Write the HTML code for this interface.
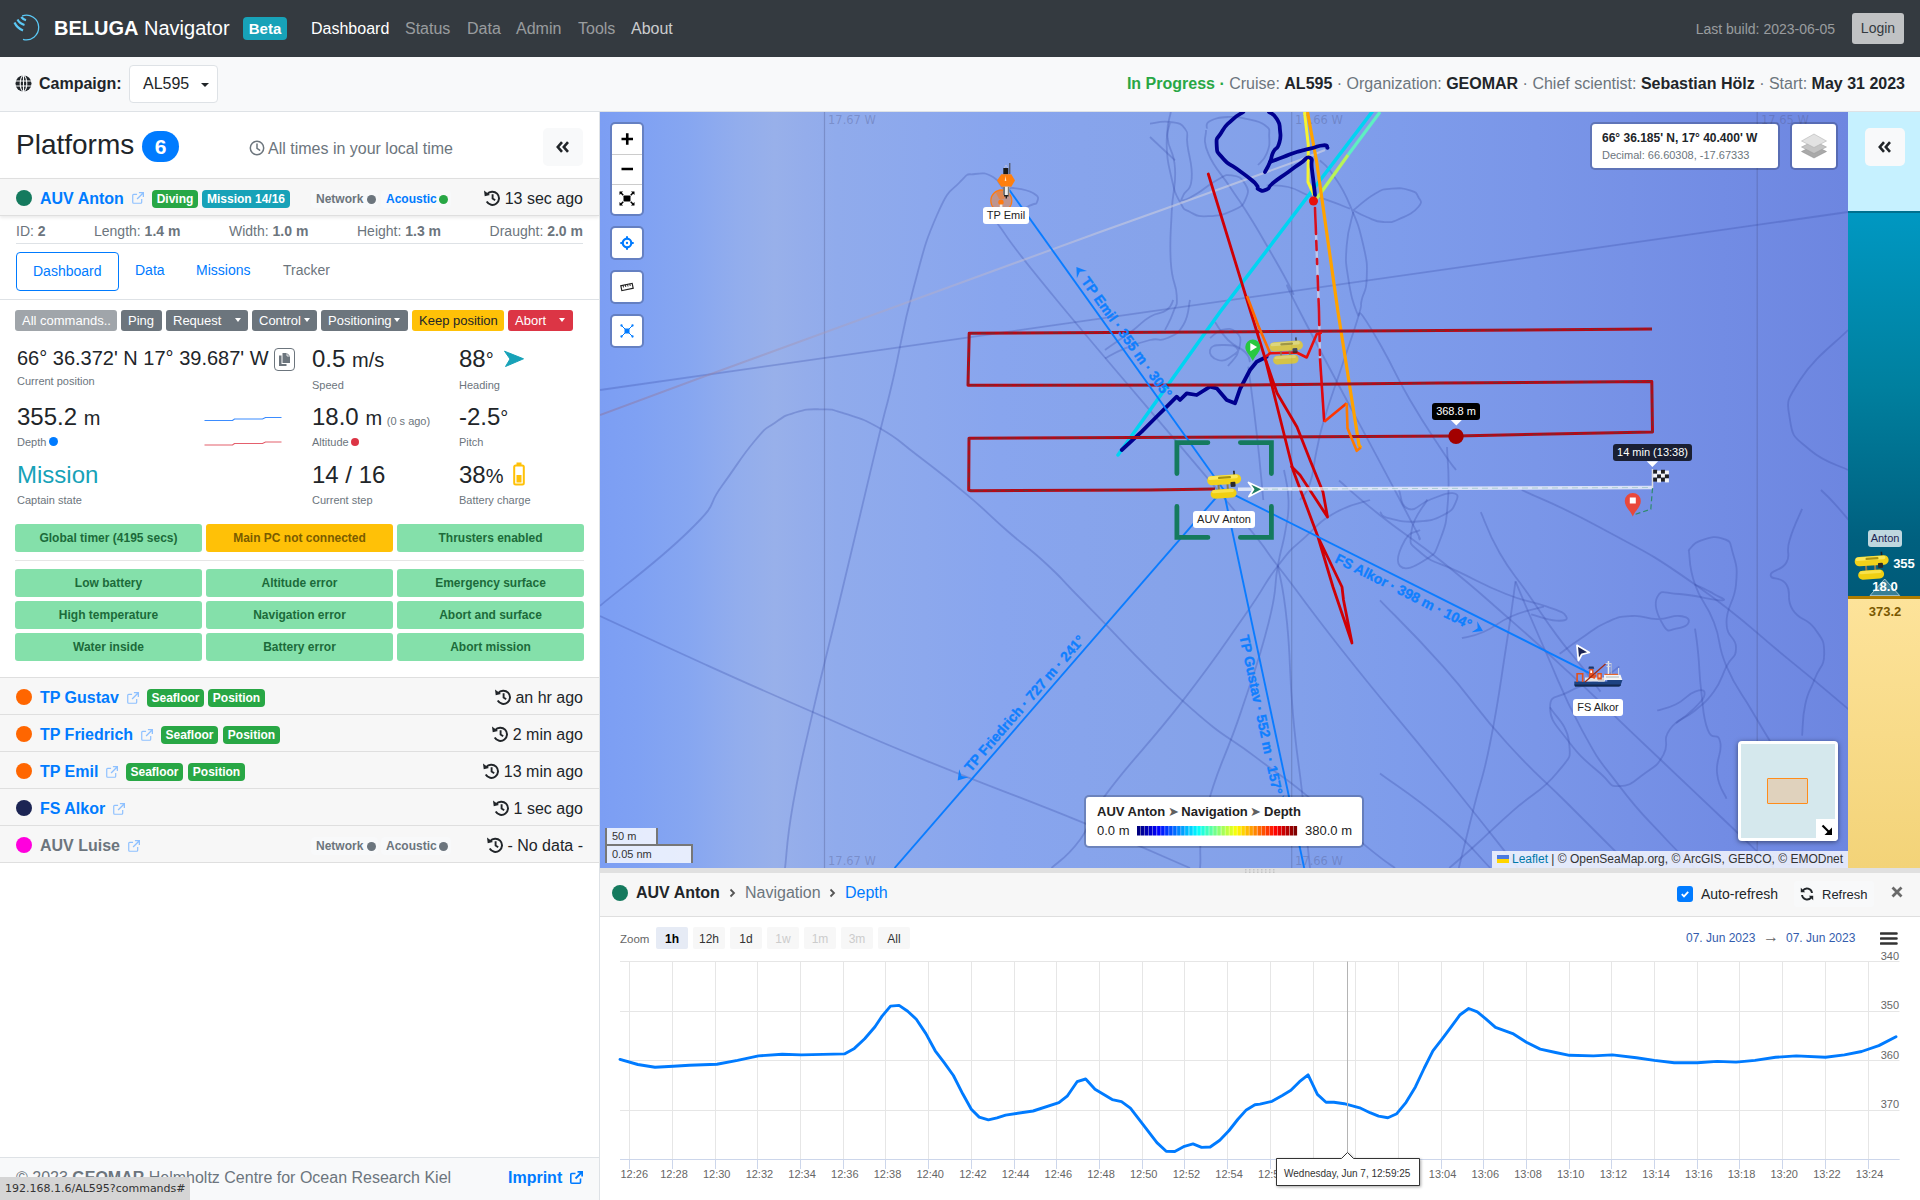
<!DOCTYPE html>
<html lang="en"><head><meta charset="utf-8"><title>BELUGA Navigator</title>
<style>
*{box-sizing:border-box}
html,body{margin:0;padding:0}
body{width:1920px;height:1200px;overflow:hidden;position:relative;background:#fff;font-family:"Liberation Sans",Arial,sans-serif;font-size:16px;color:#212529;line-height:1.5}
a{color:#007bff;text-decoration:none}
.abs{position:absolute}
/* navbar */
#nav{position:absolute;left:0;top:0;width:1920px;height:57px;background:#343a40;color:#fff}
#nav .brand{position:absolute;left:54px;top:13px;font-size:20px;line-height:30px;white-space:nowrap}
#nav .beta{position:absolute;left:243px;top:17px;height:23px;width:44px;background:#17a2b8;border-radius:4px;font-size:15px;font-weight:700;line-height:23px;text-align:center}
#nav .lnk{position:absolute;top:17px;font-size:16px;line-height:24px;color:rgba(255,255,255,.5);white-space:nowrap}
#nav .lnk.on{color:#fff}
#nav .lnk.mid{color:rgba(255,255,255,.75)}
#nav .build{position:absolute;right:85px;top:17px;font-size:14px;line-height:24px;color:rgba(255,255,255,.5)}
#nav .login{position:absolute;left:1852px;top:13px;width:52px;height:31px;background:#c0c2c4;border-radius:3px;color:#343a40;font-size:14px;line-height:31px;text-align:center}
/* campaign bar */
#camp{position:absolute;left:0;top:57px;width:1920px;height:55px;background:#f8f9fa;border-bottom:1px solid #dee2e6;box-shadow:0 2px 4px rgba(0,0,0,.08)}
#camp .lbl{position:absolute;left:39px;top:15px;font-weight:700;font-size:16px;line-height:24px}
#camp .sel{position:absolute;left:129px;top:8px;width:89px;height:38px;border:1px solid #dee2e6;border-radius:4px;background:#fff;font-size:16px;line-height:36px;padding-left:13px}
#camp .info{position:absolute;right:15px;top:15px;font-size:16px;line-height:24px;color:#6c757d;white-space:nowrap}
#camp .info b{color:#212529}
/* left panel */
#left{position:absolute;left:0;top:112px;width:600px;height:1088px;border-right:1px solid #dee2e6;background:#fff}
/* map */
#map{position:absolute;left:600px;top:112px;width:1248px;height:756px;overflow:hidden;background:#8aa5ee}
#dp{position:absolute;left:1848px;top:112px;width:72px;height:756px;overflow:hidden}
#split{position:absolute;left:600px;top:868px;width:1320px;height:5px;background:#e0e0e0}
#chart{position:absolute;left:600px;top:873px;width:1320px;height:327px;background:#fff}
</style></head>
<body>
<svg width="0" height="0" style="position:absolute"><defs>
<g id="xl"><path d="M10.500 7.500v3.700a1 1 0 0 1-1 1h-7.700a1 1 0 0 1-1-1v-7.700a1 1 0 0 1 1-1h3.700" fill="none" stroke="#8fc1ff" stroke-width="1.300"/><path d="M7.500.7h4.800v4.800M12 1L5.500 7.500" fill="none" stroke="#8fc1ff" stroke-width="1.400"/></g>
<g id="xl2"><path d="M10.500 7.500v3.700a1 1 0 0 1-1 1h-7.700a1 1 0 0 1-1-1v-7.700a1 1 0 0 1 1-1h3.700" fill="none" stroke="#007bff" stroke-width="1.600"/><path d="M7.500.8h4.700v4.700M12 1L5.500 7.500" fill="none" stroke="#007bff" stroke-width="1.800"/></g>
<g id="hist"><path d="M3.200 4.200A6.600 6.600 0 1 1 2.700 11.600" fill="none" stroke="#212529" stroke-width="2"/><path d="M0 .6l.7 5.600 5.300-1.200z" fill="#212529"/><path d="M8.600 4.200v4.300l2.600 1.800" fill="none" stroke="#212529" stroke-width="1.900"/></g>
</defs></svg>

<div id="nav">
<svg class="abs" style="left:12px;top:12px" width="30" height="30" viewBox="0 0 30 30"><path d="M10.200 3.900A12.300 12.300 0 1 1 11 27.300" fill="none" stroke="#5bc8f5" stroke-width="1.300"/><path d="M9.300 5Q11 7.300 14 8.200M5.500 7.500Q7.500 11.500 12.500 13M2.500 10.500Q5 16 11 18.500" fill="none" stroke="#5bc8f5" stroke-width="2.200"/></svg>
<div class="brand"><b>BELUGA</b> Navigator</div>
<div class="beta">Beta</div>
<div class="lnk on" style="left:311px">Dashboard</div>
<div class="lnk" style="left:405px">Status</div>
<div class="lnk" style="left:467px">Data</div>
<div class="lnk" style="left:516px">Admin</div>
<div class="lnk" style="left:578px">Tools</div>
<div class="lnk mid" style="left:631px">About</div>
<div class="build">Last build: 2023-06-05</div>
<div class="login">Login</div>
</div>
<div id="camp">
<svg class="abs" style="left:15px;top:18px" width="17" height="17" viewBox="0 0 17 17"><circle cx="8.500" cy="8.500" r="8" fill="#212529"/><g stroke="#f8f9fa" stroke-width="1.100" fill="none"><ellipse cx="8.500" cy="8.500" rx="3.300" ry="8"/><path d="M.5 6h16M.5 11h16M8.500 .5v16"/></g></svg>
<div class="lbl">Campaign:</div>
<div class="sel">AL595 <span style="display:inline-block;vertical-align:2px;margin-left:7px;border-top:4px solid #212529;border-left:4px solid transparent;border-right:4px solid transparent"></span></div>
<div class="info"><b style="color:#28a745">In Progress</b> <b style="color:#28a745">·</b> Cruise: <b>AL595</b> · Organization: <b>GEOMAR</b> · Chief scientist: <b>Sebastian Hölz</b> · Start: <b>May 31 2023</b></div>
</div>
<div id="left"><style>
#left .t{position:absolute;white-space:nowrap;line-height:1}
#left .hdr{position:absolute;left:0;width:599px;background:#f7f7f7;border-top:1px solid #dfdfdf;border-bottom:1px solid #dfdfdf}
.dot16{position:absolute;left:16px;width:16px;height:16px;border-radius:50%}
.bdg{position:absolute;height:18px;border-radius:4px;color:#fff;font-weight:700;font-size:12px;line-height:18px;text-align:center;white-space:nowrap}
.g{background:#28a745}
.sm{font-size:11px;color:#6c757d}
.big{font-size:24px;color:#212529}
.cmd{position:absolute;top:198px;height:21px;border-radius:3px;background:#6c757d;color:#fff;font-size:13px;line-height:21px;white-space:nowrap;padding-left:7px}
.car{position:absolute;top:8px;border-top:4px solid #fff;border-left:3.500px solid transparent;border-right:3.500px solid transparent}
.st{position:absolute;width:187px;height:28px;border-radius:3px;background:#84e0aa;color:#1c6b3a;font-weight:700;font-size:12px;line-height:28px;text-align:center}
.row{position:absolute;left:0;width:599px;height:38px;background:#f7f7f7;border-top:1px solid #dfdfdf;border-bottom:1px solid #dfdfdf}
.row .nm{position:absolute;left:40px;top:12px;font-weight:700;font-size:16px;line-height:1;white-space:nowrap}
.row .tm{position:absolute;right:16px;top:12px;font-size:16px;line-height:1;white-space:nowrap;color:#212529}
.nb{position:absolute;height:18px;border-radius:4px;background:#f8f9fa;font-weight:700;font-size:12px;line-height:18px;color:#6c757d;white-space:nowrap;padding-left:5px}
.nb i{position:absolute;top:5px;width:9px;height:9px;border-radius:50%;background:#6c757d}
</style>
<div class="t" style="left:16px;top:16px;font-size:28px;line-height:34px">Platforms</div>
<div class="abs" style="left:142px;top:19px;width:37px;height:31px;border-radius:16px;background:#007bff;color:#fff;font-weight:700;font-size:21px;line-height:31px;text-align:center">6</div>
<svg class="abs" style="left:249px;top:28px" width="16" height="16" viewBox="0 0 16 16"><circle cx="8" cy="8" r="6.700" fill="none" stroke="#6c757d" stroke-width="1.500"/><path d="M8 4v4.300l2.600 1.900" fill="none" stroke="#6c757d" stroke-width="1.500" stroke-linecap="round"/></svg>
<div class="t" style="left:268px;top:29px;font-size:16px;color:#6c757d;line-height:16px">All times in your local time</div>
<div class="abs" style="left:543px;top:16px;width:40px;height:38px;border-radius:5px;background:#f8f9fa"><svg class="abs" style="left:13px;top:13px" width="14" height="12" viewBox="0 0 14 12"><path d="M6 1.200L1.800 6 6 10.800M12 1.200L7.800 6 12 10.800" fill="none" stroke="#212529" stroke-width="2.600"/></svg></div>
<!-- AUV Anton header -->
<div class="hdr" style="top:66px;height:38px;box-shadow:0 2px 3px rgba(0,0,0,.08)"></div>
<div class="dot16" style="top:78px;background:#157a5e"></div>
<div class="t" style="left:40px;top:79px;font-weight:700;font-size:16px;color:#007bff">AUV Anton</div>
<svg class="abs xl" style="left:132px;top:80px" width="12" height="12" viewBox="0 0 13 13"><use href="#xl"/></svg>
<div class="bdg g" style="left:152px;top:78px;width:46px">Diving</div>
<div class="bdg" style="left:202px;top:78px;width:88px;background:#17a2b8">Mission 14/16</div>
<div class="nb" style="left:311px;top:78px;width:67px">Network<i style="left:56px"></i></div>
<div class="nb" style="left:381px;top:78px;width:70px;color:#007bff">Acoustic<i style="left:58px;background:#28a745"></i></div>
<svg class="abs" style="left:484px;top:78px" width="16" height="16" viewBox="0 0 16 16"><use href="#hist"/></svg>
<div class="t" style="right:16px;top:79px;font-size:16px">13 sec ago</div>
<!-- details -->
<div class="t" style="left:16px;top:112px;font-size:14px;color:#6c757d;top:112px">ID: <b>2</b></div>
<div class="t" style="left:94px;top:112px;font-size:14px;color:#6c757d">Length: <b>1.4 m</b></div>
<div class="t" style="left:229px;top:112px;font-size:14px;color:#6c757d">Width: <b>1.0 m</b></div>
<div class="t" style="left:357px;top:112px;font-size:14px;color:#6c757d">Height: <b>1.3 m</b></div>
<div class="t" style="right:16px;top:112px;font-size:14px;color:#6c757d">Draught: <b>2.0 m</b></div>
<div class="abs" style="left:16px;top:131px;width:567px;height:1px;background:#dee2e6"></div>
<!-- tabs -->
<div class="abs" style="left:16px;top:140px;width:103px;height:39px;border:1px solid #007bff;border-radius:4px"></div>
<div class="t" style="left:33px;top:152px;font-size:14px;color:#007bff">Dashboard</div>
<div class="t" style="left:135px;top:151px;font-size:14px;color:#007bff">Data</div>
<div class="t" style="left:196px;top:151px;font-size:14px;color:#007bff">Missions</div>
<div class="t" style="left:283px;top:151px;font-size:14px;color:#6c757d">Tracker</div>
<div class="abs" style="left:0;top:187px;width:599px;height:1px;background:#dee2e6"></div>
<!-- commands -->
<div class="cmd" style="left:15px;width:102px;background:#a0a5aa">All commands..</div>
<div class="cmd" style="left:121px;width:41px">Ping</div>
<div class="cmd" style="left:166px;width:82px">Request<i class="car" style="left:69px"></i></div>
<div class="cmd" style="left:252px;width:65px">Control<i class="car" style="left:52px"></i></div>
<div class="cmd" style="left:321px;width:87px">Positioning<i class="car" style="left:73px"></i></div>
<div class="cmd" style="left:412px;width:92px;background:#ffc107;color:#212529">Keep position</div>
<div class="cmd" style="left:508px;width:65px;background:#dc3545">Abort<i class="car" style="left:51px"></i></div>
<!-- data grid -->
<div class="t" style="left:17px;top:236px;font-size:20px">66° 36.372' N 17° 39.687' W</div>
<div class="abs" style="left:274px;top:236px;width:21px;height:23px;border:1px solid #6c757d;border-radius:4px"><svg class="abs" style="left:4px;top:4px" width="11" height="13" viewBox="0 0 11 13"><path d="M3.500 0h4.500l3 3v7h-7.500z" fill="#6c757d"/><path d="M0 2.500h2.500v8.500h5v2h-7.500z" fill="#6c757d"/><path d="M8 0v3h3" fill="none" stroke="#fff" stroke-width=".8"/></svg></div>
<div class="t sm" style="left:17px;top:264px">Current position</div>
<div class="t big" style="left:312px;top:235px">0.5 <span style="font-size:20px">m/s</span></div>
<div class="t sm" style="left:312px;top:268px">Speed</div>
<div class="t big" style="left:459px;top:235px">88<span style="font-size:20px">°</span></div>
<svg class="abs" style="left:503px;top:238px" width="21" height="18" viewBox="0 0 21 18"><path d="M1.500 1.200L20.500 8.800 2.500 16.500 7 9z" fill="#17a2b8" stroke="#17a2b8" stroke-width="1" stroke-linejoin="round"/></svg>
<div class="t sm" style="left:459px;top:268px">Heading</div>
<div class="t big" style="left:17px;top:293px">355.2 <span style="font-size:20px">m</span></div>
<div class="t sm" style="left:17px;top:325px">Depth</div>
<div class="abs" style="left:49px;top:325px;width:9px;height:9px;border-radius:50%;background:#007bff"></div>
<svg class="abs" style="left:200px;top:300px" width="90" height="40" viewBox="0 0 90 40"><path d="M4.500 8.500h28l2-1.500h28l3-1.500h16" fill="none" stroke="#3b8cff" stroke-width="1.200"/><path d="M4.500 33h28l2-1.500h28l3-1.500h16" fill="none" stroke="#e4606d" stroke-width="1.200"/></svg>
<div class="t big" style="left:312px;top:293px">18.0 <span style="font-size:20px">m</span> <span class="sm" style="margin-left:-2px">(0 s ago)</span></div>
<div class="t sm" style="left:312px;top:325px">Altitude</div>
<div class="abs" style="left:351px;top:326px;width:8px;height:8px;border-radius:50%;background:#dc3545"></div>
<div class="t big" style="left:459px;top:293px">-2.5<span style="font-size:20px">°</span></div>
<div class="t sm" style="left:459px;top:325px">Pitch</div>
<div class="t big" style="left:17px;top:351px;color:#17a2b8">Mission</div>
<div class="t sm" style="left:17px;top:383px">Captain state</div>
<div class="t big" style="left:312px;top:351px">14 / 16</div>
<div class="t sm" style="left:312px;top:383px">Current step</div>
<div class="t big" style="left:459px;top:351px">38<span style="font-size:20px">%</span></div>
<svg class="abs" style="left:513px;top:350px" width="12" height="24" viewBox="0 0 12 24"><rect x="1.200" y="3.500" width="9.600" height="19" rx="1.500" fill="none" stroke="#ffc107" stroke-width="2"/><rect x="3.500" y=".5" width="5" height="3" fill="#ffc107"/><rect x="3.500" y="13" width="5" height="7.500" fill="#ffc107"/></svg>
<div class="t sm" style="left:459px;top:383px">Battery charge</div>
<!-- status boxes -->
<div class="st" style="left:15px;top:412px">Global timer (4195 secs)</div>
<div class="st" style="left:206px;top:412px;background:#ffc107;color:#7a5c00">Main PC not connected</div>
<div class="st" style="left:397px;top:412px">Thrusters enabled</div>
<div class="abs" style="left:15px;top:448px;width:569px;height:1px;background:#e6e6e6"></div>
<div class="st" style="left:15px;top:457px">Low battery</div>
<div class="st" style="left:206px;top:457px">Altitude error</div>
<div class="st" style="left:397px;top:457px">Emergency surface</div>
<div class="st" style="left:15px;top:489px">High temperature</div>
<div class="st" style="left:206px;top:489px">Navigation error</div>
<div class="st" style="left:397px;top:489px">Abort and surface</div>
<div class="st" style="left:15px;top:521px">Water inside</div>
<div class="st" style="left:206px;top:521px">Battery error</div>
<div class="st" style="left:397px;top:521px">Abort mission</div>
<!-- other platforms -->
<div class="row" style="top:565px"><div class="dot16" style="top:11px;background:#ff6600"></div><div class="nm"><a>TP Gustav</a></div><svg class="abs" style="left:127px;top:14px" width="12" height="12" viewBox="0 0 13 13"><use href="#xl"/></svg><div class="bdg g" style="left:147px;top:11px;width:57px">Seafloor</div><div class="bdg g" style="left:208px;top:11px;width:57px">Position</div><svg class="abs" style="left:495px;top:11px" width="16" height="16" viewBox="0 0 16 16"><use href="#hist"/></svg><div class="tm">an hr ago</div></div>
<div class="row" style="top:602px"><div class="dot16" style="top:11px;background:#ff6600"></div><div class="nm"><a>TP Friedrich</a></div><svg class="abs" style="left:141px;top:14px" width="12" height="12" viewBox="0 0 13 13"><use href="#xl"/></svg><div class="bdg g" style="left:161px;top:11px;width:57px">Seafloor</div><div class="bdg g" style="left:223px;top:11px;width:57px">Position</div><svg class="abs" style="left:492px;top:11px" width="16" height="16" viewBox="0 0 16 16"><use href="#hist"/></svg><div class="tm">2 min ago</div></div>
<div class="row" style="top:639px"><div class="dot16" style="top:11px;background:#ff6600"></div><div class="nm"><a>TP Emil</a></div><svg class="abs" style="left:106px;top:14px" width="12" height="12" viewBox="0 0 13 13"><use href="#xl"/></svg><div class="bdg g" style="left:126px;top:11px;width:57px">Seafloor</div><div class="bdg g" style="left:188px;top:11px;width:57px">Position</div><svg class="abs" style="left:483px;top:11px" width="16" height="16" viewBox="0 0 16 16"><use href="#hist"/></svg><div class="tm">13 min ago</div></div>
<div class="row" style="top:676px"><div class="dot16" style="top:11px;background:#1c2554"></div><div class="nm"><a>FS Alkor</a></div><svg class="abs" style="left:113px;top:14px" width="12" height="12" viewBox="0 0 13 13"><use href="#xl"/></svg><svg class="abs" style="left:493px;top:11px" width="16" height="16" viewBox="0 0 16 16"><use href="#hist"/></svg><div class="tm">1 sec ago</div></div>
<div class="row" style="top:713px"><div class="dot16" style="top:11px;background:#ff00dd"></div><div class="nm" style="color:#6c757d">AUV Luise</div><svg class="abs" style="left:128px;top:14px" width="12" height="12" viewBox="0 0 13 13"><use href="#xl"/></svg><div class="nb" style="left:311px;top:11px;width:67px">Network<i style="left:56px"></i></div><div class="nb" style="left:381px;top:11px;width:70px">Acoustic<i style="left:58px"></i></div><svg class="abs" style="left:487px;top:11px" width="16" height="16" viewBox="0 0 16 16"><use href="#hist"/></svg><div class="tm">- No data -</div></div>
<!-- footer -->
<div class="abs" style="left:0;top:1045px;width:599px;height:43px;background:#f8f9fa;border-top:1px solid #dee2e6"></div>
<div class="t" style="left:16px;top:1058px;font-size:16px;color:#6c757d">© 2023 <b>GEOMAR</b> Helmholtz Centre for Ocean Research Kiel</div>
<div class="t" style="left:508px;top:1058px;font-size:16px;font-weight:700;color:#007bff">Imprint</div>
<svg class="abs" style="left:570px;top:1059px" width="13" height="13" viewBox="0 0 13 13"><use href="#xl2"/></svg>
<div class="abs" style="left:0;top:1065px;width:190px;height:23px;white-space:nowrap;background:#d5d5d5;border-top-right-radius:3px;font-size:11px;line-height:23px;color:#333;padding-left:5px;font-family:'DejaVu Sans','Liberation Sans',sans-serif">192.168.1.6/AL595?commands#</div>
</div>
<div id="map"><style>
#map .ctl{position:absolute;background:#fff;border:2px solid rgba(0,0,0,.2);background-clip:padding-box;border-radius:5px}
#map .lab{position:absolute;background:#fff;border-radius:3px;font-size:11px;line-height:16px;height:17px;text-align:center;color:#222;white-space:nowrap}
#map .tip{position:absolute;border-radius:3px;font-size:11px;line-height:16px;height:17px;text-align:center;color:#fff;white-space:nowrap}
</style>
<svg class="abs" style="left:0;top:0" width="1248" height="756" viewBox="600 112 1248 756" font-family="Liberation Sans, Arial, sans-serif">
<defs><linearGradient id="bg" x1="0" x2="1" y1="0" y2="0">
<stop offset="0" stop-color="#7c9ef3"/><stop offset=".03" stop-color="#7fa1f3"/><stop offset=".07" stop-color="#86a6f1"/><stop offset=".11" stop-color="#92aded"/><stop offset=".14" stop-color="#98b0ea"/><stop offset=".165" stop-color="#94adeb"/><stop offset=".19" stop-color="#90abec"/><stop offset=".26" stop-color="#8ca8ed"/><stop offset=".32" stop-color="#88a5ee"/><stop offset=".45" stop-color="#86a3ea"/><stop offset=".56" stop-color="#82a0ea"/><stop offset=".64" stop-color="#7e9ceb"/><stop offset=".75" stop-color="#7a96e8"/><stop offset=".9" stop-color="#728ce4"/><stop offset="1" stop-color="#6d86e0"/></linearGradient><linearGradient id="wl" gradientUnits="userSpaceOnUse" x1="600" x2="1325" y1="0" y2="0"><stop offset="0" stop-color="rgba(140,110,150,.45)"/><stop offset=".35" stop-color="rgba(170,160,190,.45)"/><stop offset=".7" stop-color="rgba(205,205,220,.55)"/><stop offset="1" stop-color="rgba(215,215,225,.6)"/></linearGradient></defs>
<rect x="600" y="112" width="1248" height="756" fill="url(#bg)"/>
<line x1="824.5" y1="112" x2="824.5" y2="868" stroke="rgba(70,80,130,.32)" stroke-width="1.2" fill="none"/>
<line x1="1291.7" y1="112" x2="1291.7" y2="868" stroke="rgba(70,80,130,.32)" stroke-width="1.2" fill="none"/>
<line x1="1757.2" y1="112" x2="1757.2" y2="868" stroke="rgba(70,80,130,.32)" stroke-width="1.2" fill="none"/>
<text x="828" y="124" fill="rgba(80,90,140,.36)" font-family="DejaVu Sans, Verdana, sans-serif" font-size="11.500">17.67 W</text>
<text x="828" y="865" fill="rgba(80,90,140,.36)" font-family="DejaVu Sans, Verdana, sans-serif" font-size="11.500">17.67 W</text>
<text x="1295" y="124" fill="rgba(80,90,140,.36)" font-family="DejaVu Sans, Verdana, sans-serif" font-size="11.500">17.66 W</text>
<text x="1295" y="865" fill="rgba(80,90,140,.36)" font-family="DejaVu Sans, Verdana, sans-serif" font-size="11.500">17.66 W</text>
<text x="1761" y="124" fill="rgba(80,90,140,.36)" font-family="DejaVu Sans, Verdana, sans-serif" font-size="11.500">17.65 W</text>
<text x="1761" y="865" fill="rgba(80,90,140,.36)" font-family="DejaVu Sans, Verdana, sans-serif" font-size="11.500">17.65 W</text>
<polyline points="600.0,390.0 1848.0,212.0" stroke="rgba(55,75,170,.30)" stroke-width="1.800" fill="none" stroke-linejoin="round"/>
<path d="M785.0 868.0C787.2 850.7 786.1 843.1 793.2 803.0C800.3 762.9 800.1 767.5 811.5 717.6C822.9 667.7 823.0 670.2 836.0 616.0C849.0 561.8 848.4 564.1 860.3 514.2C872.2 464.3 872.0 464.6 880.7 428.8C889.4 393.0 884.3 417.0 892.9 380.0C901.5 343.0 901.2 334.0 913.0 290.0C924.8 246.0 924.5 243.8 937.0 215.0C949.5 186.2 949.9 192.9 960.0 182.0C970.1 171.1 966.2 175.3 975.0 174.0C983.8 172.7 985.0 172.7 993.0 177.0C1001.0 181.3 999.7 187.1 1005.0 190.0C1010.3 192.9 1005.5 187.2 1013.0 188.0C1020.5 188.8 1026.6 189.3 1033.0 193.0C1039.4 196.7 1038.6 198.3 1037.0 202.0C1035.4 205.7 1037.7 201.4 1027.0 207.0C1016.3 212.6 1005.0 218.7 997.0 223.0" stroke="rgba(55,75,170,.30)" stroke-width="1.800" fill="none" stroke-linejoin="round"/>
<path d="M997.0 223.0C1012.9 243.5 996.4 226.9 1056.7 300.0C1117.0 373.1 1164.3 426.1 1223.3 497.0C1282.3 567.9 1251.8 532.5 1277.8 566.0C1303.8 599.5 1297.0 592.0 1320.7 622.7C1344.4 653.4 1334.9 641.7 1366.7 681.0C1398.5 720.3 1399.7 720.1 1440.0 770.0C1480.3 819.9 1497.2 841.9 1518.0 868.0" stroke="rgba(55,75,170,.30)" stroke-width="1.800" fill="none" stroke-linejoin="round"/>
<path d="M600.0 605.8C623.9 585.7 657.0 562.5 689.5 530.5C722.0 498.5 704.6 509.7 722.0 485.8C739.4 461.9 740.5 457.8 754.6 441.0C768.7 424.2 764.1 430.3 775.0 422.7C785.9 415.1 783.4 416.1 795.3 412.5C807.2 408.9 806.7 409.1 819.7 409.3C832.7 409.5 827.7 408.2 844.0 413.4C860.3 418.6 861.2 417.6 880.7 428.8C900.2 440.0 894.6 437.9 917.3 455.3C940.0 472.7 942.1 473.8 966.0 493.9C989.9 514.0 985.1 511.5 1006.8 530.5C1028.5 549.5 1026.0 544.9 1047.5 565.0C1069.0 585.1 1051.5 569.6 1087.6 605.8C1123.7 642.0 1137.7 660.4 1182.7 700.9C1227.7 741.4 1223.6 732.7 1256.3 757.6C1289.0 782.5 1276.0 770.7 1305.4 794.4C1334.8 818.1 1342.8 827.0 1366.7 846.6C1390.6 866.2 1387.5 862.3 1395.0 868.0" stroke="rgba(55,75,170,.30)" stroke-width="1.800" fill="none" stroke-linejoin="round"/>
<path d="M600.0 616.0C628.2 629.0 649.4 639.2 705.8 664.7C762.2 690.2 752.9 686.0 811.5 711.5C870.1 737.0 853.8 731.0 925.4 760.3C997.0 789.6 1009.4 792.7 1080.0 821.4C1150.6 850.1 1160.7 855.6 1190.0 868.0" stroke="rgba(55,75,170,.30)" stroke-width="1.800" fill="none" stroke-linejoin="round"/>
<path d="M1051.5 868.0C1059.1 860.5 1065.5 859.3 1080.0 839.7C1094.5 820.1 1078.6 831.4 1106.0 794.4C1133.4 757.4 1145.9 748.3 1182.7 700.9C1219.5 653.5 1218.6 652.5 1244.0 616.5C1269.4 580.5 1261.4 587.3 1277.8 566.0C1294.2 544.7 1289.9 551.1 1305.4 536.8C1320.9 522.5 1318.8 522.1 1336.0 512.3C1353.2 502.5 1360.9 503.3 1370.0 500.0" stroke="rgba(55,75,170,.30)" stroke-width="1.800" fill="none" stroke-linejoin="round"/>
<path d="M1200.0 868.0C1201.9 851.7 1196.3 848.4 1207.2 806.7C1218.1 765.0 1224.6 760.7 1241.0 711.6C1257.4 662.5 1258.8 661.5 1268.6 622.7C1278.4 583.9 1273.3 590.5 1277.8 566.0C1282.3 541.5 1282.5 548.3 1285.4 530.7C1288.3 513.1 1288.9 516.2 1288.5 500.0C1288.1 483.8 1285.2 478.0 1284.0 470.0" stroke="rgba(55,75,170,.30)" stroke-width="1.800" fill="none" stroke-linejoin="round"/>
<path d="M1278.0 566.0C1280.4 581.1 1283.0 583.0 1287.0 622.7C1291.0 662.4 1288.9 668.9 1293.0 714.7C1297.1 760.5 1297.8 753.5 1302.3 794.4C1306.8 835.3 1307.9 848.4 1310.0 868.0" stroke="rgba(55,75,170,.30)" stroke-width="1.800" fill="none" stroke-linejoin="round"/>
<path d="M1150.0 123.7C1155.3 123.2 1160.7 120.7 1170.0 122.0C1179.3 123.3 1180.3 122.5 1185.0 128.7C1189.7 134.9 1185.7 132.0 1187.5 145.3C1189.3 158.6 1192.8 165.4 1191.7 178.7C1190.6 192.0 1185.5 189.5 1183.3 195.3C1181.1 201.1 1179.7 200.7 1183.3 200.3C1186.9 199.9 1187.8 199.0 1196.7 193.7C1205.6 188.4 1207.4 185.2 1216.7 180.3C1226.0 175.4 1224.2 174.4 1231.7 175.3C1239.2 176.2 1241.2 177.5 1245.0 183.7C1248.8 189.9 1248.9 191.6 1245.8 198.7C1242.7 205.8 1243.3 205.6 1233.3 210.3C1223.3 215.0 1219.8 215.7 1208.3 216.2C1196.8 216.7 1197.5 215.8 1190.0 212.0C1182.5 208.2 1184.9 210.9 1180.0 202.0C1175.1 193.1 1175.2 193.8 1171.7 178.7C1168.2 163.6 1167.2 160.4 1166.7 145.3C1166.2 130.2 1169.1 128.2 1170.0 122.0" stroke="rgba(55,75,170,.30)" stroke-width="1.800" fill="none" stroke-linejoin="round"/>
<path d="M1170.8 112.0C1169.9 118.7 1166.4 121.9 1167.5 137.0C1168.6 152.1 1173.9 148.7 1175.0 168.7C1176.1 188.7 1172.8 187.1 1171.7 212.0C1170.6 236.9 1169.5 239.8 1170.8 262.0C1172.1 284.2 1176.0 282.0 1176.7 295.3C1177.4 308.6 1176.4 302.7 1173.3 312.0C1170.2 321.3 1167.2 325.2 1165.0 330.0" stroke="rgba(55,75,170,.30)" stroke-width="1.800" fill="none" stroke-linejoin="round"/>
<polyline points="1150.0,137.0 1175.0,160.3" stroke="rgba(55,75,170,.30)" stroke-width="1.800" fill="none" stroke-linejoin="round"/>
<path d="M1206.7 128.7C1207.6 126.6 1204.3 124.1 1210.0 121.0C1215.7 117.9 1218.7 117.6 1228.0 117.0C1237.3 116.4 1235.1 116.5 1245.0 118.7C1254.9 120.9 1258.5 120.4 1265.0 125.3C1271.5 130.2 1268.7 129.4 1269.2 137.0C1269.7 144.6 1269.7 146.2 1266.7 153.7C1263.7 161.2 1260.3 162.0 1258.0 165.0" stroke="rgba(55,75,170,.30)" stroke-width="1.800" fill="none" stroke-linejoin="round"/>
<path d="M1206.0 130.0C1206.6 136.3 1201.9 138.5 1208.3 153.7C1214.7 168.9 1219.8 171.5 1230.0 187.0C1240.2 202.5 1236.9 196.5 1246.7 212.0C1256.5 227.5 1254.7 224.4 1266.7 245.3C1278.7 266.2 1282.8 272.5 1291.7 290.3C1300.6 308.1 1271.1 256.1 1300.0 312.0C1328.9 367.9 1368.0 439.2 1400.0 500.0C1432.0 560.8 1414.7 529.3 1420.0 540.0" stroke="rgba(55,75,170,.30)" stroke-width="1.800" fill="none" stroke-linejoin="round"/>
<path d="M1320.0 160.3C1323.5 164.3 1325.3 163.3 1333.3 175.3C1341.3 187.3 1342.0 186.6 1350.0 205.3C1358.0 224.0 1358.8 225.7 1363.3 245.3C1367.8 264.9 1367.1 264.1 1366.7 278.7C1366.3 293.3 1363.9 289.9 1361.7 300.0C1359.5 310.1 1363.6 298.9 1358.3 316.7C1353.0 334.5 1350.6 340.0 1341.7 366.7C1332.8 393.4 1331.7 394.5 1325.0 416.7C1318.3 438.9 1320.7 432.2 1316.7 450.0C1312.7 467.8 1314.5 470.0 1310.0 483.3C1305.5 496.6 1302.7 495.5 1300.0 500.0" stroke="rgba(55,75,170,.30)" stroke-width="1.800" fill="none" stroke-linejoin="round"/>
<path d="M1353.3 212.0C1351.5 220.9 1348.0 227.5 1346.7 245.3C1345.4 263.1 1345.6 260.9 1348.3 278.7C1351.0 296.5 1352.7 301.9 1356.7 312.0C1360.7 322.1 1356.2 306.6 1363.3 316.7C1370.4 326.8 1370.8 327.8 1383.3 350.0C1395.8 372.2 1394.4 373.3 1410.0 400.0C1425.6 426.7 1429.4 431.3 1441.7 450.0C1454.0 468.7 1452.2 464.7 1456.0 470.0" stroke="rgba(55,75,170,.30)" stroke-width="1.800" fill="none" stroke-linejoin="round"/>
<path d="M1353.3 210.3C1359.1 205.9 1364.8 199.5 1375.0 193.7C1385.2 187.9 1382.4 189.6 1391.7 188.7C1401.0 187.8 1402.9 188.1 1410.0 190.3C1417.1 192.5 1416.1 192.5 1418.3 197.0C1420.5 201.5 1423.2 201.2 1418.3 207.0C1413.4 212.8 1409.3 214.7 1400.0 218.7C1390.7 222.7 1392.2 222.5 1383.3 222.0C1374.4 221.5 1374.7 220.1 1366.7 217.0C1358.7 213.9 1356.9 212.1 1353.3 210.3" stroke="rgba(55,75,170,.30)" stroke-width="1.800" fill="none" stroke-linejoin="round"/>
<path d="M1266.7 185.3C1272.5 185.8 1277.2 184.3 1288.3 187.0C1299.4 189.7 1299.0 192.2 1308.3 195.3C1317.6 198.4 1312.2 195.1 1323.3 198.7C1334.4 202.3 1342.9 206.0 1350.0 208.7" stroke="rgba(55,75,170,.30)" stroke-width="1.800" fill="none" stroke-linejoin="round"/>
<path d="M1248.3 366.7C1250.5 384.5 1252.7 397.8 1256.7 433.3C1260.7 468.8 1261.5 482.2 1263.3 500.0" stroke="rgba(55,75,170,.30)" stroke-width="1.800" fill="none" stroke-linejoin="round"/>
<path d="M1105.0 350.0C1108.1 347.8 1109.2 347.0 1116.7 341.7C1124.2 336.4 1124.4 336.7 1133.3 330.0C1142.2 323.3 1141.1 322.0 1150.0 316.7C1158.9 311.4 1160.5 314.5 1166.7 310.0C1172.9 305.5 1171.5 302.7 1173.3 300.0" stroke="rgba(55,75,170,.30)" stroke-width="1.800" fill="none" stroke-linejoin="round"/>
<path d="M1105.0 358.3C1110.3 355.6 1113.0 353.2 1125.0 348.3C1137.0 343.4 1138.9 342.7 1150.0 340.0C1161.1 337.3 1157.8 342.3 1166.7 338.3C1175.6 334.3 1177.1 335.2 1183.3 325.0C1189.5 314.8 1188.2 306.7 1190.0 300.0" stroke="rgba(55,75,170,.30)" stroke-width="1.800" fill="none" stroke-linejoin="round"/>
<path d="M1210.0 338.0C1213.2 335.9 1215.1 331.6 1222.0 330.0C1228.9 328.4 1231.2 328.0 1236.0 332.0C1240.8 336.0 1241.1 338.6 1240.0 345.0C1238.9 351.4 1237.9 352.0 1232.0 356.0C1226.1 360.0 1223.9 361.6 1218.0 360.0C1212.1 358.4 1208.9 354.0 1210.0 350.0C1211.1 346.0 1214.5 345.0 1222.0 345.0C1229.5 345.0 1236.4 344.4 1238.0 350.0C1239.6 355.6 1230.7 361.7 1228.0 366.0" stroke="rgba(55,75,170,.30)" stroke-width="1.800" fill="none" stroke-linejoin="round"/>
<path d="M1215.0 322.0C1218.5 326.8 1220.0 332.0 1228.0 340.0C1236.0 348.0 1239.1 346.1 1245.0 352.0C1250.9 357.9 1248.7 359.3 1250.0 362.0" stroke="rgba(55,75,170,.30)" stroke-width="1.800" fill="none" stroke-linejoin="round"/>
<path d="M1521.8 490.0C1542.8 500.1 1554.3 502.6 1600.5 527.8C1646.7 553.0 1644.6 549.2 1695.0 584.5C1745.4 619.8 1748.2 626.5 1789.5 660.1C1830.8 693.7 1833.9 697.1 1850.0 710.5" stroke="rgba(55,75,170,.30)" stroke-width="1.800" fill="none" stroke-linejoin="round"/>
<path d="M1339.0 480.5C1349.9 489.8 1352.3 493.3 1380.0 515.2C1407.7 537.1 1409.4 535.6 1443.0 562.5C1476.6 589.4 1472.4 586.6 1506.0 616.0C1539.6 645.4 1535.4 641.6 1569.0 672.7C1602.6 703.8 1598.4 700.7 1632.0 732.6C1665.6 764.5 1661.4 760.5 1695.0 792.4C1728.6 824.3 1737.0 832.1 1758.0 852.3C1779.0 872.5 1769.6 863.8 1773.8 868.0" stroke="rgba(55,75,170,.30)" stroke-width="1.800" fill="none" stroke-linejoin="round"/>
<path d="M1380.0 600.3C1396.8 617.9 1409.4 628.6 1443.0 666.4C1476.6 704.2 1472.4 705.0 1506.0 742.0C1539.6 779.0 1535.4 771.4 1569.0 805.0C1602.6 838.6 1615.2 851.2 1632.0 868.0" stroke="rgba(55,75,170,.30)" stroke-width="1.800" fill="none" stroke-linejoin="round"/>
<path d="M1515.5 581.4C1513.0 599.0 1512.7 604.7 1506.0 647.5C1499.3 690.3 1498.7 700.0 1490.3 742.0C1481.9 784.0 1482.9 771.4 1474.5 805.0C1466.1 838.6 1463.0 851.2 1458.8 868.0" stroke="rgba(55,75,170,.30)" stroke-width="1.800" fill="none" stroke-linejoin="round"/>
<path d="M1515.5 581.4C1523.0 599.0 1526.2 608.0 1543.8 647.5C1561.4 687.0 1561.4 692.4 1581.6 729.4C1601.8 766.4 1597.6 757.5 1619.4 786.1C1641.2 814.7 1643.3 814.7 1663.5 836.5C1683.7 858.3 1686.6 859.6 1695.0 868.0" stroke="rgba(55,75,170,.30)" stroke-width="1.800" fill="none" stroke-linejoin="round"/>
<path d="M1480.8 512.1C1485.8 523.0 1487.1 531.2 1499.7 553.0C1512.3 574.8 1513.0 572.2 1528.1 594.0C1543.2 615.8 1542.1 615.6 1556.4 634.9C1570.7 654.2 1569.8 651.3 1581.6 666.4C1593.4 681.5 1595.5 684.9 1600.5 691.6" stroke="rgba(55,75,170,.30)" stroke-width="1.800" fill="none" stroke-linejoin="round"/>
<path d="M1427.3 499.5C1423.1 507.9 1413.2 516.7 1411.5 531.0C1409.8 545.3 1408.4 542.1 1421.0 553.0C1433.6 563.9 1436.1 561.0 1458.8 571.9C1481.5 582.8 1482.5 584.7 1506.0 594.0C1529.5 603.3 1531.0 600.7 1547.0 606.6C1563.0 612.5 1563.4 612.2 1565.9 616.0C1568.4 619.8 1565.7 621.1 1556.4 620.7C1547.1 620.3 1537.9 616.1 1531.2 614.4" stroke="rgba(55,75,170,.30)" stroke-width="1.800" fill="none" stroke-linejoin="round"/>
<path d="M1461.9 638.1C1467.8 636.4 1470.6 637.7 1484.0 631.8C1497.4 625.9 1496.4 622.7 1512.3 616.0C1528.2 609.3 1535.4 609.1 1543.8 606.6" stroke="rgba(55,75,170,.30)" stroke-width="1.800" fill="none" stroke-linejoin="round"/>
<path d="M1559.6 653.8C1565.5 649.6 1569.0 646.5 1581.6 638.1C1594.2 629.7 1593.4 628.2 1606.8 622.3C1620.2 616.4 1618.6 616.8 1632.0 616.0C1645.4 615.2 1644.6 619.2 1657.2 619.2C1669.8 619.2 1670.9 615.2 1679.3 616.0C1687.7 616.8 1689.6 618.9 1688.7 622.3C1687.8 625.7 1682.8 627.7 1676.1 628.6C1669.4 629.5 1668.5 633.9 1663.5 625.5C1658.5 617.1 1653.0 605.5 1657.2 597.1C1661.4 588.7 1662.5 593.1 1679.3 594.0C1696.1 594.9 1711.0 600.3 1720.2 600.3C1729.4 600.3 1720.6 598.2 1713.9 594.0C1707.2 589.8 1700.0 587.0 1695.0 584.5" stroke="rgba(55,75,170,.30)" stroke-width="1.800" fill="none" stroke-linejoin="round"/>
<path d="M1688.7 549.9C1692.1 547.4 1692.0 543.4 1701.3 540.4C1710.6 537.4 1715.0 535.4 1723.4 538.8C1731.8 542.2 1729.4 540.8 1732.8 553.0C1736.2 565.2 1737.7 566.0 1736.0 584.5C1734.3 603.0 1726.5 605.5 1726.5 622.3C1726.5 639.1 1736.0 635.7 1736.0 647.5C1736.0 659.3 1732.4 654.6 1726.5 666.4C1720.6 678.2 1722.3 679.8 1713.9 691.6C1705.5 703.4 1706.8 700.4 1695.0 710.5C1683.2 720.6 1678.2 717.6 1669.8 729.4C1661.4 741.2 1670.2 742.8 1663.5 754.6C1656.8 766.4 1656.4 765.1 1644.6 773.5C1632.8 781.9 1631.2 786.1 1619.4 786.1C1607.6 786.1 1613.9 785.3 1600.5 773.5C1587.1 761.7 1582.4 759.6 1569.0 742.0C1555.6 724.4 1550.1 720.8 1550.1 707.4C1550.1 694.0 1555.6 699.2 1569.0 691.6C1582.4 684.0 1587.1 685.7 1600.5 679.0C1613.9 672.3 1614.4 669.8 1619.4 666.4" stroke="rgba(55,75,170,.30)" stroke-width="1.800" fill="none" stroke-linejoin="round"/>
<path d="M1688.7 549.9C1690.4 559.1 1688.3 565.2 1695.0 584.5C1701.7 603.8 1705.5 600.5 1713.9 622.3C1722.3 644.1 1716.4 642.9 1726.5 666.4C1736.6 689.9 1739.9 690.3 1751.7 710.5C1763.5 730.7 1765.6 733.6 1770.6 742.0" stroke="rgba(55,75,170,.30)" stroke-width="1.800" fill="none" stroke-linejoin="round"/>
<path d="M1802.1 508.9C1798.7 517.3 1793.7 526.1 1789.5 540.4C1785.3 554.7 1791.4 553.2 1786.4 562.5C1781.4 571.8 1770.6 569.2 1770.6 575.1C1770.6 581.0 1780.5 575.3 1786.4 584.5C1792.3 593.7 1785.2 597.9 1792.7 609.7C1800.2 621.5 1806.3 616.8 1814.7 628.6C1823.1 640.4 1824.2 640.4 1824.2 653.8C1824.2 667.2 1819.7 665.6 1814.7 679.0C1809.7 692.4 1808.7 689.1 1805.3 704.2C1801.9 719.3 1803.0 727.3 1802.1 735.7" stroke="rgba(55,75,170,.30)" stroke-width="1.800" fill="none" stroke-linejoin="round"/>
<path d="M1695.0 628.6C1695.9 635.3 1696.5 637.0 1698.2 653.8C1699.9 670.6 1698.8 671.4 1701.3 691.6C1703.8 711.8 1702.6 716.0 1707.6 729.4C1712.6 742.8 1717.7 730.2 1720.2 742.0C1722.7 753.8 1715.4 758.4 1717.1 773.5C1718.8 788.6 1724.0 792.0 1726.5 798.7" stroke="rgba(55,75,170,.30)" stroke-width="1.800" fill="none" stroke-linejoin="round"/>
<path d="M1380.0 773.5C1396.8 786.1 1413.6 795.6 1443.0 820.8C1472.4 846.0 1477.7 855.4 1490.3 868.0" stroke="rgba(55,75,170,.30)" stroke-width="1.800" fill="none" stroke-linejoin="round"/>
<path d="M1550.1 707.4C1555.1 716.6 1567.3 724.4 1569.0 742.0C1570.7 759.6 1571.5 755.0 1556.4 773.5C1541.3 792.0 1534.1 792.0 1512.3 811.3C1490.5 830.6 1491.3 830.9 1474.5 846.0C1457.7 861.1 1456.0 862.1 1449.3 868.0" stroke="rgba(55,75,170,.30)" stroke-width="1.800" fill="none" stroke-linejoin="round"/>
<path d="M1657.2 710.5C1662.2 708.8 1666.0 709.2 1676.1 704.2C1686.2 699.2 1687.4 694.1 1695.0 691.6C1702.6 689.1 1705.3 689.8 1704.5 694.8C1703.7 699.8 1699.5 703.0 1691.9 710.5C1684.3 718.0 1680.3 719.7 1676.1 723.1" stroke="rgba(55,75,170,.30)" stroke-width="1.800" fill="none" stroke-linejoin="round"/>
<path d="M1850.0 521.5C1845.6 516.5 1841.3 511.0 1833.6 502.6C1825.9 494.2 1824.4 493.4 1821.0 490.0" stroke="rgba(55,75,170,.30)" stroke-width="1.800" fill="none" stroke-linejoin="round"/>
<path d="M1398.9 490.0C1401.4 495.0 1400.0 506.4 1408.4 508.9C1416.8 511.4 1418.6 503.7 1430.4 499.5C1442.2 495.3 1445.8 492.4 1452.5 493.2C1459.2 494.0 1458.1 496.7 1455.6 502.6C1453.1 508.5 1453.1 510.2 1443.0 515.2C1432.9 520.2 1432.1 520.6 1417.8 521.5C1403.5 522.4 1399.6 520.9 1389.5 518.4C1379.4 515.9 1382.5 513.8 1380.0 512.1" stroke="rgba(55,75,170,.30)" stroke-width="1.800" fill="none" stroke-linejoin="round"/>
<path d="M1447.0 447.0C1447.3 461.1 1449.9 475.2 1448.0 500.0C1446.1 524.8 1446.1 524.0 1440.0 540.0C1433.9 556.0 1435.7 553.1 1425.0 560.0C1414.3 566.9 1405.3 571.3 1400.0 566.0C1394.7 560.7 1399.7 549.6 1405.0 540.0C1410.3 530.4 1416.0 532.7 1420.0 530.0" stroke="rgba(55,75,170,.30)" stroke-width="1.800" fill="none" stroke-linejoin="round"/>
<path d="M1848.0 330.0C1835.2 343.3 1815.5 356.0 1800.0 380.0C1784.5 404.0 1787.3 401.3 1790.0 420.0C1792.7 438.7 1794.5 436.7 1810.0 450.0C1825.5 463.3 1837.9 464.7 1848.0 470.0" stroke="rgba(55,75,170,.30)" stroke-width="1.800" fill="none" stroke-linejoin="round"/>
<polyline points="600.0,415.0 700.0,378.0 900.0,305.0 1100.0,232.0 1170.0,207.0 1250.0,178.0 1300.0,160.0 1325.0,150.0" stroke="url(#wl)" stroke-width="2" fill="none"/>
<polyline points="1372.0,112.0 1220.0,312.0 1118.0,455.0" stroke="#00d4f2" stroke-width="3.500" fill="none" stroke-linecap="round"/>
<polyline points="1380.0,112.0 1348.0,155.0" stroke="#5ef0c2" stroke-width="3.200" fill="none"/>
<polyline points="1348.0,155.0 1316.5,199.0" stroke="#b8f458" stroke-width="3.200" fill="none"/>
<polyline points="1304.5,112.0 1308.3,145.0 1308.0,182.0 1315.0,197.0" stroke="#f6f430" stroke-width="3" fill="none" stroke-linejoin="round"/>
<polyline points="1307.5,112.0 1316.7,162.0 1338.0,312.0 1359.0,445.0 1361.0,448.0" stroke="#ffa200" stroke-width="3.200" fill="none" stroke-linejoin="round"/>
<path d="M1243.3 112.0C1239.4 114.8 1238.9 113.6 1231.7 120.3C1224.5 127.0 1226.7 123.7 1221.7 132.0C1216.7 140.3 1216.2 136.4 1216.7 145.3C1217.2 154.2 1216.6 150.9 1223.3 158.7C1230.0 166.5 1227.8 162.0 1236.7 168.7C1245.6 175.4 1243.3 173.2 1250.0 178.7C1256.7 184.2 1253.7 181.7 1256.7 185.3C1259.7 188.9 1255.7 188.1 1259.0 189.5C1262.3 190.9 1261.9 191.7 1266.7 189.5C1271.5 187.3 1266.1 188.6 1273.3 182.8C1280.5 177.0 1279.4 178.4 1288.3 172.0C1297.2 165.6 1292.8 168.4 1300.0 163.7C1307.2 159.0 1306.0 155.7 1310.0 157.8C1314.0 159.9 1310.3 157.6 1312.0 170.0C1313.7 182.4 1314.0 186.7 1315.0 195.0" stroke="#00008f" stroke-width="3.800" fill="none" stroke-linejoin="round" stroke-linecap="round"/>
<path d="M1269.0 112.0C1271.6 114.2 1273.0 112.6 1276.7 118.7C1280.4 124.8 1279.2 122.0 1280.0 130.3C1280.8 138.6 1281.2 136.5 1279.0 143.7C1276.8 150.9 1276.3 145.9 1273.3 152.0C1270.3 158.1 1272.8 155.3 1270.0 162.0C1267.2 168.7 1266.7 168.7 1265.0 172.0" stroke="#00008f" stroke-width="3.800" fill="none" stroke-linejoin="round" stroke-linecap="round"/>
<path d="M1270.0 162.0C1274.4 160.3 1274.4 160.3 1283.3 157.0C1292.2 153.7 1287.8 154.8 1296.7 152.0C1305.6 149.2 1301.1 150.9 1310.0 148.7C1318.9 146.5 1317.5 145.6 1323.3 145.3C1329.1 145.0 1326.1 147.0 1327.5 147.8" stroke="#00008f" stroke-width="3.800" fill="none" stroke-linejoin="round" stroke-linecap="round"/>
<polyline points="1121.7,450.0 1141.7,431.7 1153.3,420.0 1165.0,408.3 1176.7,396.7 1180.0,400.0 1186.7,393.3 1196.7,395.0 1210.0,386.7 1216.7,388.3 1226.7,400.0 1235.0,403.3 1240.0,389.0 1250.0,370.0 1256.7,361.7 1266.7,356.7" stroke="#00008f" stroke-width="3.800" fill="none" stroke-linejoin="round" stroke-linecap="round"/>
<polyline points="1315.0,208.0 1319.0,312.0 1320.0,358.0" stroke="rgba(235,225,235,.6)" stroke-width="2.400" fill="none"/>
<polyline points="1315.0,208.0 1319.0,312.0 1320.0,358.0" stroke="#d41020" stroke-width="2.600" fill="none" stroke-dasharray="26 7 9 9 5 12 14 9" stroke-linecap="round"/>
<polyline points="1652.0,329.0 1440.0,330.6 1250.0,331.7 969.2,333.3 968.0,385.3 1250.0,385.0 1440.0,383.0 1651.8,381.5 1652.5,432.0 1456.0,436.0 1250.0,437.0 969.0,438.3 968.7,490.0 971.0,490.8 1150.0,490.0 1215.0,489.0" stroke="#b20a18" stroke-width="3" fill="none" stroke-linejoin="round"/>
<polyline points="1652.0,329.0 1440.0,330.6 1250.0,331.7 969.2,333.3 968.0,385.3 1250.0,385.0 1440.0,383.0 1651.8,381.5 1652.5,432.0 1456.0,436.0 1250.0,437.0 969.0,438.3 968.7,490.0 971.0,490.8 1150.0,490.0 1215.0,489.0" stroke="#3c4a46" stroke-width="1" fill="none" stroke-dasharray="5 4" opacity=".6"/>
<polyline points="1208.3,174.0 1247.0,300.0 1265.0,358.0 1293.0,470.0 1318.0,537.0 1333.0,587.0 1352.0,643.0 1343.5,600.0 1342.0,587.0 1318.0,537.0" stroke="#cf0006" stroke-width="2.800" fill="none" stroke-linejoin="round" stroke-linecap="round"/>
<polyline points="1265.0,358.0 1277.0,393.0 1297.0,427.0 1310.0,460.0 1323.0,492.0 1327.5,517.0 1300.0,475.0 1291.7,466.7" stroke="#cf0006" stroke-width="2.800" fill="none" stroke-linejoin="round" stroke-linecap="round"/>
<polyline points="1247.0,296.0 1258.0,325.0 1270.0,353.0" stroke="#ff6a00" stroke-width="2.600" fill="none"/>
<polyline points="1266.0,356.5 1270.0,353.3 1296.7,352.5 1306.7,357.5 1316.7,334.2 1321.7,332.5" stroke="#e81010" stroke-width="2.600" fill="none" stroke-linejoin="round"/>
<polyline points="1320.0,358.3 1324.2,421.7" stroke="#e00810" stroke-width="2.600" fill="none" stroke-linejoin="round"/>
<polyline points="1324.2,421.7 1346.7,403.3" stroke="#ff3500" stroke-width="2.600" fill="none" stroke-linejoin="round"/>
<polyline points="1346.7,403.3 1347.5,428.3 1356.7,450.8 1360.8,447.5" stroke="#ff7a00" stroke-width="2.600" fill="none" stroke-linejoin="round"/>
<circle cx="1313.500" cy="201" r="4.500" fill="#e8100c"/>
<line x1="1223.3" y1="489.3" x2="1009.0" y2="189.5" stroke="#0a7cff" stroke-width="1.900" fill="none"/>
<line x1="1223.3" y1="489.3" x2="894.6" y2="868.0" stroke="#0a7cff" stroke-width="1.900" fill="none"/>
<line x1="1223.3" y1="489.3" x2="1304.2" y2="868.0" stroke="#0a7cff" stroke-width="1.900" fill="none"/>
<line x1="1223.3" y1="489.3" x2="1590.0" y2="673.3" stroke="#0a7cff" stroke-width="1.900" fill="none"/>
<g transform="translate(1009.0 189.5) rotate(54.44)" fill="#0f7fff"><path d="M102.2 -9.8l9.500 -6.200 -3.600 6.200 3.600 6.200z"/><text x="116.5" y="-5.0" font-size="14" font-weight="700" stroke="#0f7fff" stroke-width=".35">TP Emil · 355 m · 305°</text></g>
<g transform="translate(894.6 868.0) rotate(-49.04)" fill="#0f7fff"><path d="M107.5 -9.8l9.500 -6.200 -3.600 6.200 3.600 6.200z"/><text x="121.8" y="-5.0" font-size="14" font-weight="700" stroke="#0f7fff" stroke-width=".35">TP Friedrich · 727 m · 241°</text></g>
<g transform="translate(1223.3 489.3) rotate(26.65)" fill="#0f7fff"><path d="M295.6 10.2l-9.500 -6.200 3.600 6.200 -3.600 6.200z"/><text x="131.6" y="15.2" font-size="14" font-weight="700" stroke="#0f7fff" stroke-width=".35">FS Alkor · 398 m · 104°</text></g>
<g transform="translate(1223.3 489.3) rotate(77.94)" fill="#0f7fff"><path d="M321.0 10.2l-9.500 -6.200 3.600 6.200 -3.600 6.200z"/><text x="147.0" y="15.2" font-size="14" font-weight="700" stroke="#0f7fff" stroke-width=".35">TP Gustav · 552 m · 157°</text></g>
<line x1="1238" y1="489.200" x2="1652.500" y2="487.500" stroke="rgba(255,255,255,.72)" stroke-width="3.400"/>
<line x1="1262" y1="489.200" x2="1652.500" y2="487.500" stroke="#3c9a7a" stroke-width="1" stroke-dasharray="6 4" opacity=".3"/>
<polyline points="1652.5,488.3 1650.8,509.2 1633.3,515.0" stroke="#2e8b6b" stroke-width="1.200" fill="none" stroke-dasharray="5 3"/>
<path d="M1248.500 482.500 L1263 489.300 L1249 496.500 L1253.500 489.300 Z" fill="#1f7d5f" stroke="#fff" stroke-width="1.800" stroke-linejoin="round"/>
<path d="M1176.9 473.6 V442.6 H1207.9 M1240.4 442.6 H1271.4 V473.6 M1271.4 506.4 V537.4 H1240.4 M1207.9 537.4 H1176.9 V506.4" stroke="#157a5e" stroke-width="4.800" fill="none" stroke-linecap="round" stroke-linejoin="miter"/>
<circle cx="1456" cy="436.200" r="7.700" fill="#a20000"/>
<path d="M1450.800 420h11l-5.500 5.500z" fill="#fff"/>
<path d="M1646.700 461.300h11.400l-5.700 5.600z" fill="#fff"/>
<path d="M1252.800 361 C1250 355 1245.300 352 1245.300 347 a7.500 7.500 0 0 1 15 0 C1260.300 352 1255.500 355 1252.800 361z" fill="#28c840"/><path d="M1250.300 343v8.200l6.800-4.100z" fill="#fff"/>
<path d="M1632.800 516.500 C1630 510 1624.800 507 1624.800 501 a8 8 0 0 1 16 0 C1640.800 507 1635.600 510 1632.800 516.500z" fill="#e8483c"/><rect x="1629.800" y="497.500" width="6" height="6" fill="#fff"/>
<line x1="1652.500" y1="469" x2="1652.500" y2="488" stroke="#ddd" stroke-width="1.500"/>
<rect x="1653.2" y="469.8" width="4" height="4" fill="#222"/><rect x="1653.2" y="473.7" width="4" height="4" fill="#f4f4f4"/><rect x="1653.2" y="477.6" width="4" height="4" fill="#222"/><rect x="1657.1" y="470.6" width="4" height="4" fill="#f4f4f4"/><rect x="1657.1" y="474.5" width="4" height="4" fill="#222"/><rect x="1657.1" y="478.4" width="4" height="4" fill="#f4f4f4"/><rect x="1661.0" y="469.8" width="4" height="4" fill="#222"/><rect x="1661.0" y="473.7" width="4" height="4" fill="#f4f4f4"/><rect x="1661.0" y="477.6" width="4" height="4" fill="#222"/><rect x="1664.9" y="470.6" width="4" height="4" fill="#f4f4f4"/><rect x="1664.9" y="474.5" width="4" height="4" fill="#222"/><rect x="1664.9" y="478.4" width="4" height="4" fill="#f4f4f4"/>
<g transform="translate(1270.0 338.0) scale(0.98) rotate(-4 17 13)" opacity="0.75"><rect x="26.500" y="0" width="1.600" height="9" fill="#222"/><rect x="10" y="9" width="2" height="14" fill="#8a7a50"/><rect x="19" y="9" width="2" height="13" fill="#8a7a50"/><rect x="0" y="3.500" width="34" height="9.500" rx="4.700" fill="#f2d21a"/><rect x="1" y="4" width="30" height="3.500" rx="1.700" fill="#fbe85a"/><rect x="11" y="5" width="13" height="2.200" rx="1" fill="#a99410"/><rect x="23" y="11" width="5" height="5" rx="1" fill="#2a2a2a"/><rect x="2.500" y="17.500" width="26" height="9" rx="4.500" fill="#f0cf12"/><rect x="4" y="18" width="22" height="3" rx="1.500" fill="#f9e24a"/></g>
<g transform="translate(1207.5 471.5) scale(1.00) rotate(-4 17 13)" opacity="1.00"><rect x="26.500" y="0" width="1.600" height="9" fill="#222"/><rect x="10" y="9" width="2" height="14" fill="#8a7a50"/><rect x="19" y="9" width="2" height="13" fill="#8a7a50"/><rect x="0" y="3.500" width="34" height="9.500" rx="4.700" fill="#f2d21a"/><rect x="1" y="4" width="30" height="3.500" rx="1.700" fill="#fbe85a"/><rect x="11" y="5" width="13" height="2.200" rx="1" fill="#a99410"/><rect x="23" y="11" width="5" height="5" rx="1" fill="#2a2a2a"/><rect x="2.500" y="17.500" width="26" height="9" rx="4.500" fill="#f0cf12"/><rect x="4" y="18" width="22" height="3" rx="1.500" fill="#f9e24a"/></g>
<circle cx="1001.300" cy="200.700" r="10.500" fill="rgba(255,130,30,.45)" stroke="#ff7a10" stroke-width="1.200"/>
<path d="M996 193l3-4h5l3 4-3 6h-5z" fill="rgba(255,120,20,.5)"/><circle cx="1001" cy="202.300" r="2.700" fill="#ff7a10"/><rect x="999.800" y="204.500" width="2.600" height="3" fill="#eee"/>
<rect x="1009.300" y="163" width="1" height="11" fill="#444"/><path d="M1006 165l-2 3.500h4z" fill="none" stroke="#ccd" stroke-width=".6"/><rect x="1003.300" y="168" width="5" height="6.300" fill="#1a1a1a"/>
<path d="M1001.300 174.300h10l3.700 6.200-3.700 6.200h-10l-4.300-6.200z" fill="#ff7f0e"/><path d="M1005.500 176l.8 5h-1.600z" fill="#ffe0c0"/>
<rect x="1003.300" y="186.700" width="6" height="8.600" fill="#eee"/><rect x="1003.300" y="186.700" width="1.500" height="8.600" fill="#555"/><rect x="1007.800" y="186.700" width="1.500" height="8.600" fill="#777"/><rect x="1004" y="195" width="4.500" height="1.500" fill="#222"/><rect x="1005.600" y="196" width="1.400" height="2.500" fill="#222"/>
<path d="M1577 645.300l12.300 7.200-7.400 1.800-3.500 6.200z" fill="#1c2554" stroke="#fff" stroke-width="1.800" stroke-linejoin="round"/>
<g transform="translate(1574 660)"><path d="M.3 21.500h33v-1.500h15.200l-2 5.500-1.500 1h-44l-.7-1.500z" fill="#1d4382"/><path d="M.5 24.500h46.500l-.6 1.500-1.400.5h-44z" fill="#12284e"/><rect x="11" y="17.500" width="20" height="4" fill="#e6e6e6"/><rect x="24" y="18.500" width="6" height="3" fill="#cfcfcf"/><path d="M30 14.700h16.500l1.800 5.300h-18.300z" fill="#f5f5f5"/><rect x="30.500" y="13.800" width="13.500" height="1.200" fill="#e5672c"/><path d="M32 17h13" stroke="#9aa" stroke-width=".8"/><rect x="33.700" y="1" width="1.500" height="13" fill="#ececec"/><path d="M31.500 3.500h6M32.500 6.500h4" stroke="#ddd" stroke-width=".9"/><rect x="44.200" y="8" width=".9" height="6.500" fill="#e8e8e8"/><rect x="36.800" y="4" width=".7" height="10" fill="#ccc"/><path d="M2.300 22v-9h7.200v9h-1.600v-7.400h-4v7.400z" fill="#e2501c"/><path d="M14.800 18l.7-9h3.800l.9 9z" fill="#e8501e"/><rect x="16.300" y="10.500" width="1.800" height="2.500" fill="#fff"/><path d="M14.300 8.800l.6-2.300h4.600l.8 2.300z" fill="#1b3568"/><rect x="23.300" y="13" width="4.500" height="6.500" fill="#e2501c"/><rect x="24.500" y="14.500" width="2" height="3" fill="#f1c0a8"/><path d="M11 22L31.500 4" stroke="#a02c14" stroke-width="1.300"/><path d="M18.500 18l2.500-4 1.500 1.500-2 3.500z" fill="#e8501e"/></g>
</svg>
<div class="lab" style="left:383px;top:95px;width:46px">TP Emil</div>
<div class="lab" style="left:593px;top:399px;width:62px">AUV Anton</div>
<div class="lab" style="left:973px;top:587px;width:50px">FS Alkor</div>
<div class="tip" style="left:832px;top:291px;width:48px;background:#000">368.8 m</div>
<div class="tip" style="left:1013px;top:332px;width:79px;background:#1a1f33">14 min (13:38)</div>
<div class="ctl" style="left:10px;top:10px;width:34px;height:94px"><div class="abs" style="left:0;top:30px;width:30px;height:1px;background:#ccc"></div><div class="abs" style="left:0;top:60px;width:30px;height:1px;background:#ccc"></div><svg class="abs" style="left:0;top:0" width="30" height="90" viewBox="0 0 30 90"><path d="M9.500 15h11.500M15.250 9.250v11.500M9.500 45h11.500" stroke="#000" stroke-width="2.600" fill="none"/><rect x="11.500" y="71.500" width="7" height="6" rx=".8" fill="#000"/><path d="M8.300 68.300l3 3M21.700 68.300l-3 3M8.300 80.700l3-3M21.700 80.700l-3-3" stroke="#000" stroke-width="1.500"/><path d="M7.500 67.500h3.600l-3.600 3.600zM22.500 67.500v3.600l-3.600-3.600zM7.500 81.500v-3.600l3.600 3.600zM22.500 81.500h-3.600l3.600-3.600z" fill="#000"/></svg></div>
<div class="ctl" style="left:10px;top:114px;width:34px;height:34px"><svg class="abs" style="left:8px;top:8px" width="14" height="14" viewBox="0 0 14 14"><circle cx="7" cy="7" r="4.300" fill="none" stroke="#007bff" stroke-width="2.200"/><circle cx="7" cy="7" r="1.150" fill="#007bff"/><path d="M7 .3v3M7 10.700v3M.3 7h3M10.700 7h3" stroke="#007bff" stroke-width="2"/></svg></div>
<div class="ctl" style="left:10px;top:158px;width:34px;height:34px"><svg class="abs" style="left:8px;top:9px" width="14" height="12" viewBox="0 0 14 12"><g transform="rotate(-12 7 6)"><rect x="1.200" y="3.500" width="11.600" height="5" fill="#fff" stroke="#222" stroke-width="1.200"/><path d="M3.500 3.500v2.200M5.800 3.500v2.200M8.100 3.500v2.200M10.400 3.500v2.200" stroke="#222" stroke-width=".9"/></g></svg></div>
<div class="ctl" style="left:10px;top:202px;width:34px;height:34px"><svg class="abs" style="left:8px;top:8px" width="14" height="14" viewBox="0 0 14 14"><path d="M1.500 1.500l11 11M12.500 1.500l-11 11" stroke="#007bff" stroke-width="1"/><rect x="4.500" y="4.500" width="5" height="5" fill="#007bff"/><circle cx="1.500" cy="1.500" r="1.150" fill="#007bff"/><circle cx="12.500" cy="1.500" r="1.150" fill="#007bff"/><circle cx="1.500" cy="12.500" r="1.150" fill="#007bff"/><circle cx="12.500" cy="12.500" r="1.150" fill="#007bff"/></svg></div>
<div class="ctl" style="left:990px;top:10px;width:190px;height:48px"><div class="abs" style="left:10px;top:7px;font-size:12px;font-weight:700;line-height:14px;white-space:nowrap;color:#212529">66° 36.185' N, 17° 40.400' W</div><div class="abs" style="left:10px;top:25px;font-size:11px;line-height:13px;white-space:nowrap;color:#6c757d">Decimal: 66.60308, -17.67333</div></div>
<div class="ctl" style="left:1190px;top:10px;width:48px;height:48px"><svg class="abs" style="left:9px;top:9px" width="26" height="26" viewBox="0 0 26 26"><path d="M13 12.500l-12.500 6 12.500 6.500 12.500-6.500z" fill="#a9a9a9" stroke="#8a8a8a" stroke-width=".5"/><path d="M13 8l-12.500 6 12.500 6.500 12.500-6.500z" fill="#c4c4c4" stroke="#999" stroke-width=".5"/><path d="M13 1l-12.500 7 12.500 6.500 12.500-6.500z" fill="#e2e2e2" stroke="#aaa" stroke-width=".5"/></svg></div>
<div class="abs" style="left:5px;top:716px;width:53px;height:18px;border:2px solid #777;border-top:none;background:rgba(255,255,255,.8);font-size:11px;line-height:16px;padding-left:5px;color:#333;white-space:nowrap">50 m</div>
<div class="abs" style="left:5px;top:732px;width:88px;height:19px;border:2px solid #777;border-bottom:none;background:rgba(255,255,255,.8);font-size:11px;line-height:16px;padding-left:5px;color:#333;white-space:nowrap">0.05 nm</div>
<div class="ctl" style="left:484px;top:683px;width:280px;height:53px"><div class="abs" style="left:11px;top:7px;font-size:13px;font-weight:700;line-height:15px;white-space:nowrap;color:#222">AUV Anton <span style="color:#606060;font-weight:400;margin:0 -1px">➤</span> Navigation <span style="color:#606060;font-weight:400;margin:0 -1px">➤</span> Depth</div><div class="abs" style="left:11px;top:26px;font-size:13px;line-height:15px;color:#222;white-space:nowrap">0.0 m</div><svg class="abs" style="left:51px;top:29px" width="161" height="10"><rect x="0.0" y="0" width="3.600" height="9.500" fill="#00007f"/><rect x="4.0" y="0" width="3.600" height="9.500" fill="#000099"/><rect x="8.0" y="0" width="3.600" height="9.500" fill="#0000b3"/><rect x="12.0" y="0" width="3.600" height="9.500" fill="#0000cd"/><rect x="16.0" y="0" width="3.600" height="9.500" fill="#0000e8"/><rect x="20.1" y="0" width="3.600" height="9.500" fill="#0003ff"/><rect x="24.1" y="0" width="3.600" height="9.500" fill="#001dff"/><rect x="28.1" y="0" width="3.600" height="9.500" fill="#0037ff"/><rect x="32.1" y="0" width="3.600" height="9.500" fill="#0051ff"/><rect x="36.1" y="0" width="3.600" height="9.500" fill="#006bff"/><rect x="40.1" y="0" width="3.600" height="9.500" fill="#0086ff"/><rect x="44.1" y="0" width="3.600" height="9.500" fill="#00a0ff"/><rect x="48.1" y="0" width="3.600" height="9.500" fill="#00baff"/><rect x="52.2" y="0" width="3.600" height="9.500" fill="#00d4ff"/><rect x="56.2" y="0" width="3.600" height="9.500" fill="#00eeff"/><rect x="60.2" y="0" width="3.600" height="9.500" fill="#09fff5"/><rect x="64.2" y="0" width="3.600" height="9.500" fill="#23ffdb"/><rect x="68.2" y="0" width="3.600" height="9.500" fill="#3effc0"/><rect x="72.2" y="0" width="3.600" height="9.500" fill="#58ffa6"/><rect x="76.2" y="0" width="3.600" height="9.500" fill="#72ff8c"/><rect x="80.2" y="0" width="3.600" height="9.500" fill="#8cff72"/><rect x="84.3" y="0" width="3.600" height="9.500" fill="#a6ff58"/><rect x="88.3" y="0" width="3.600" height="9.500" fill="#c0ff3e"/><rect x="92.3" y="0" width="3.600" height="9.500" fill="#dbff23"/><rect x="96.3" y="0" width="3.600" height="9.500" fill="#f5ff09"/><rect x="100.3" y="0" width="3.600" height="9.500" fill="#ffee00"/><rect x="104.3" y="0" width="3.600" height="9.500" fill="#ffd400"/><rect x="108.3" y="0" width="3.600" height="9.500" fill="#ffba00"/><rect x="112.3" y="0" width="3.600" height="9.500" fill="#ffa000"/><rect x="116.3" y="0" width="3.600" height="9.500" fill="#ff8600"/><rect x="120.4" y="0" width="3.600" height="9.500" fill="#ff6b00"/><rect x="124.4" y="0" width="3.600" height="9.500" fill="#ff5100"/><rect x="128.4" y="0" width="3.600" height="9.500" fill="#ff3700"/><rect x="132.4" y="0" width="3.600" height="9.500" fill="#ff1d00"/><rect x="136.4" y="0" width="3.600" height="9.500" fill="#ff0300"/><rect x="140.4" y="0" width="3.600" height="9.500" fill="#e80000"/><rect x="144.4" y="0" width="3.600" height="9.500" fill="#cd0000"/><rect x="148.4" y="0" width="3.600" height="9.500" fill="#b30000"/><rect x="152.5" y="0" width="3.600" height="9.500" fill="#990000"/><rect x="156.5" y="0" width="3.600" height="9.500" fill="#7f0000"/></svg><div class="abs" style="left:219px;top:26px;font-size:13px;line-height:15px;color:#222;white-space:nowrap">380.0 m</div></div>
<div class="abs" style="left:1138px;top:629px;width:100px;height:100px;background:#fff;border-radius:4px;box-shadow:0 1px 5px rgba(0,0,0,.5)"><div class="abs" style="left:3px;top:3px;width:94px;height:94px;background:#d5e8ed"></div><div class="abs" style="left:29px;top:37px;width:41px;height:26px;border:1px solid #ff8c1a;background:#e0d2bd;border-radius:1px"></div><div class="abs" style="left:78px;top:78px;width:22px;height:22px;background:#fff;border-bottom-right-radius:4px"><svg class="abs" style="left:5px;top:5px" width="12" height="12" viewBox="0 0 12 12"><path d="M1.500 1.500l8 8" stroke="#000" stroke-width="2.200"/><path d="M11 3.500v7.500h-7.500z" fill="#000"/></svg></div></div>
<div class="abs" style="left:892px;top:739px;width:356px;height:17px;background:rgba(255,255,255,.8);font-size:12px;line-height:17px;color:#333;white-space:nowrap;padding-left:20px"><svg class="abs" style="left:5px;top:4px" width="12" height="8"><rect width="12" height="4" fill="#4c7be1"/><rect y="4" width="12" height="4" fill="#ffd500"/></svg><span style="color:#0078a8">Leaflet</span> | © OpenSeaMap.org, © ArcGIS, GEBCO, © EMODnet</div></div>
<div id="dp"><div class="abs" style="left:0;top:0;width:72px;height:100px;background:#c6f1ff"></div>
<div class="abs" style="left:0;top:100px;width:72px;height:386px;background:linear-gradient(#0098c2,#00809f 45%,#00607f 85%,#005a78)"></div>
<div class="abs" style="left:0;top:99px;width:72px;height:2px;background:#00708f"></div>
<div class="abs" style="left:0;top:484px;width:72px;height:3px;background:#b07d00"></div>
<div class="abs" style="left:0;top:487px;width:72px;height:269px;background:linear-gradient(#fde39a,#f3d378)"></div>
<div class="abs" style="left:17px;top:16px;width:40px;height:38px;border-radius:5px;background:#f8f9fa"><svg class="abs" style="left:13px;top:13px" width="14" height="12" viewBox="0 0 14 12"><path d="M6 1.200L1.800 6 6 10.800M12 1.200L7.800 6 12 10.800" fill="none" stroke="#212529" stroke-width="2.600"/></svg></div>
<div class="abs" style="left:20px;top:418px;width:34px;height:17px;border-radius:3px;background:rgba(255,255,255,.75);font-size:11px;line-height:16px;text-align:center;color:#1c2554">Anton</div>
<svg class="abs" style="left:0;top:436px" width="72" height="52" viewBox="1848 548 72 52">
<g transform="translate(1855 552.500) rotate(-4 17 13)"><rect x="26.500" y="0" width="1.600" height="9" fill="#222"/><rect x="10" y="9" width="2" height="14" fill="#8a7a50"/><rect x="19" y="9" width="2" height="13" fill="#8a7a50"/><rect x="0" y="3.500" width="34" height="9.500" rx="4.700" fill="#f2d21a"/><rect x="1" y="4" width="30" height="3.500" rx="1.700" fill="#fbe85a"/><rect x="11" y="5" width="13" height="2.200" rx="1" fill="#a99410"/><rect x="23" y="11" width="5" height="5" rx="1" fill="#2a2a2a"/><rect x="2.500" y="17.500" width="26" height="9" rx="4.500" fill="#f0cf12"/><rect x="4" y="18" width="22" height="3" rx="1.500" fill="#f9e24a"/></g>
<path d="M1870 595.500L1884.700 579l15 16.500z" fill="rgba(255,255,255,.22)" stroke="rgba(255,255,255,.55)" stroke-width="1"/>
<text x="1904" y="568" font-family="Liberation Sans, Arial, sans-serif" font-size="13" font-weight="700" fill="#fff" text-anchor="middle">355</text>
<text x="1885" y="591" font-family="Liberation Sans, Arial, sans-serif" font-size="13" font-weight="700" fill="#fff" text-anchor="middle">18.0</text>
</svg>
<div class="abs" style="left:0;top:492px;width:74px;text-align:center;font-size:13px;font-weight:700;line-height:15px;color:#7a5800">373.2</div>
</div>
<div id="split"><svg class="abs" style="left:645px;top:1px" width="32" height="4"><g fill="#c4c4c4"><rect x="0" y="0" width="1.500" height="1.500"/><rect x="0" y="2.500" width="1.500" height="1.500"/><rect x="4" y="0" width="1.500" height="1.500"/><rect x="4" y="2.500" width="1.500" height="1.500"/><rect x="8" y="0" width="1.500" height="1.500"/><rect x="8" y="2.500" width="1.500" height="1.500"/><rect x="12" y="0" width="1.500" height="1.500"/><rect x="12" y="2.500" width="1.500" height="1.500"/><rect x="16" y="0" width="1.500" height="1.500"/><rect x="16" y="2.500" width="1.500" height="1.500"/><rect x="20" y="0" width="1.500" height="1.500"/><rect x="20" y="2.500" width="1.500" height="1.500"/><rect x="24" y="0" width="1.500" height="1.500"/><rect x="24" y="2.500" width="1.500" height="1.500"/><rect x="28" y="0" width="1.500" height="1.500"/><rect x="28" y="2.500" width="1.500" height="1.500"/></g></svg></div>
<div id="chart"><style>
#chart .zb{position:absolute;top:54px;width:32px;height:22px;border-radius:2px;background:#f7f7f7;font-size:12px;line-height:24px;text-align:center;color:#333}
</style>
<div class="abs" style="left:0;top:0;width:1320px;height:44px;background:#f7f7f7;border-bottom:1px solid #dfdfdf"></div>
<div class="abs" style="left:12px;top:12px;width:16px;height:16px;border-radius:50%;background:#157a5e"></div>
<div class="abs" style="left:36px;top:12px;font-size:16px;line-height:16px;font-weight:700;white-space:nowrap;color:#212529">AUV Anton</div>
<svg class="abs" style="left:129px;top:15px" width="7" height="10" viewBox="0 0 7 10"><path d="M1.500 1.500L5 5 1.500 8.500" fill="none" stroke="#555" stroke-width="1.800"/></svg>
<div class="abs" style="left:145px;top:12px;font-size:16px;line-height:16px;white-space:nowrap;color:#6c757d">Navigation</div>
<svg class="abs" style="left:229px;top:15px" width="7" height="10" viewBox="0 0 7 10"><path d="M1.500 1.500L5 5 1.500 8.500" fill="none" stroke="#555" stroke-width="1.800"/></svg>
<div class="abs" style="left:245px;top:12px;font-size:16px;line-height:16px;white-space:nowrap;color:#007bff">Depth</div>
<div class="abs" style="left:1077px;top:13px;width:16px;height:16px;border-radius:3px;background:#007bff"><svg class="abs" style="left:3px;top:3px" width="10" height="10" viewBox="0 0 10 10"><path d="M1.800 5.200l2.200 2.200 4.200-4.600" fill="none" stroke="#fff" stroke-width="1.800"/></svg></div>
<div class="abs" style="left:1101px;top:14px;font-size:14px;line-height:14px;white-space:nowrap;color:#212529">Auto-refresh</div>
<div class="abs" style="left:1194px;top:8px;width:80px;height:26px;border-radius:3px;background:#f8f9fa"></div>
<svg class="abs" style="left:1200px;top:14px" width="14" height="14" viewBox="0 0 14 14"><path d="M12 6A5.100 5.100 0 0 0 2.800 3.600M2 8a5.100 5.100 0 0 0 9.200 2.400" fill="none" stroke="#212529" stroke-width="1.900"/><path d="M.8.800v4.400h4.400zM13.200 13.200v-4.400h-4.400z" fill="#212529"/></svg>
<div class="abs" style="left:1222px;top:15px;font-size:13px;line-height:13px;white-space:nowrap;color:#212529">Refresh</div>
<svg class="abs" style="left:1291px;top:13px" width="12" height="12" viewBox="0 0 12 12"><path d="M1.500 1.500l9 9M10.500 1.500l-9 9" stroke="#6a6a6a" stroke-width="2.800"/></svg>
<div class="abs" style="left:20px;top:60px;font-size:11.500px;line-height:12px;color:#666;white-space:nowrap">Zoom</div>
<div class="zb" style="left:56px;background:#e6ebf5;font-weight:700;color:#000">1h</div>
<div class="zb" style="left:93px;">12h</div>
<div class="zb" style="left:130px;">1d</div>
<div class="zb" style="left:167px;color:#ccc">1w</div>
<div class="zb" style="left:204px;color:#ccc">1m</div>
<div class="zb" style="left:241px;color:#ccc">3m</div>
<div class="zb" style="left:278px;">All</div>
<div class="abs" style="left:1086px;top:58px;font-size:12px;line-height:14px;color:#335cad;white-space:nowrap">07. Jun 2023</div>
<div class="abs" style="left:1163px;top:57px;font-size:16px;line-height:14px;color:#666;white-space:nowrap">→</div>
<div class="abs" style="left:1186px;top:58px;font-size:12px;line-height:14px;color:#335cad;white-space:nowrap">07. Jun 2023</div>
<svg class="abs" style="left:1280px;top:59px" width="18" height="13" viewBox="0 0 18 13"><path d="M1 1.500h15.500M1 6.500h15.500M1 11.500h15.500" stroke="#333" stroke-width="2.600" stroke-linecap="round"/></svg>
<svg class="abs" style="left:0;top:44px" width="1320" height="283" viewBox="600 917 1320 283" font-family="Liberation Sans, Arial, sans-serif">
<path d="M629.5 961.500V1159.500M672.5 961.500V1159.500M715.5 961.500V1159.500M757.5 961.500V1159.500M800.5 961.500V1159.500M843.5 961.500V1159.500M885.5 961.500V1159.500M928.5 961.500V1159.500M971.5 961.500V1159.500M1014.5 961.500V1159.500M1056.5 961.500V1159.500M1099.5 961.500V1159.500M1142.5 961.500V1159.500M1184.5 961.500V1159.500M1227.5 961.500V1159.500M1270.5 961.500V1159.500M1313.5 961.500V1159.500M1355.5 961.500V1159.500M1398.5 961.500V1159.500M1441.5 961.500V1159.500M1483.5 961.500V1159.500M1526.5 961.500V1159.500M1569.5 961.500V1159.500M1611.5 961.500V1159.500M1654.5 961.500V1159.500M1697.5 961.500V1159.500M1739.5 961.500V1159.500M1782.5 961.500V1159.500M1825.5 961.500V1159.500M1868.5 961.500V1159.500" stroke="#e6e6e6" stroke-width="1" fill="none"/>
<path d="M620 961.5H1899.500M620 1011.5H1899.500M620 1060.5H1899.500M620 1110.5H1899.500M620 1159.5H1899.500" stroke="#e6e6e6" stroke-width="1" fill="none"/>
<path d="M620 1159.500H1899.500M629.5 1159.500V1169M672.5 1159.500V1169M715.5 1159.500V1169M757.5 1159.500V1169M800.5 1159.500V1169M843.5 1159.500V1169M885.5 1159.500V1169M928.5 1159.500V1169M971.5 1159.500V1169M1014.5 1159.500V1169M1056.5 1159.500V1169M1099.5 1159.500V1169M1142.5 1159.500V1169M1184.5 1159.500V1169M1227.5 1159.500V1169M1270.5 1159.500V1169M1313.5 1159.500V1169M1355.5 1159.500V1169M1398.5 1159.500V1169M1441.5 1159.500V1169M1483.5 1159.500V1169M1526.5 1159.500V1169M1569.5 1159.500V1169M1611.5 1159.500V1169M1654.5 1159.500V1169M1697.5 1159.500V1169M1739.5 1159.500V1169M1782.5 1159.500V1169M1825.5 1159.500V1169M1868.5 1159.500V1169" stroke="#ccd6eb" stroke-width="1" fill="none"/>
<text x="1899" y="959.9" font-size="11" fill="#666" text-anchor="end">340</text>
<text x="1899" y="1009.3" font-size="11" fill="#666" text-anchor="end">350</text>
<text x="1899" y="1058.7" font-size="11" fill="#666" text-anchor="end">360</text>
<text x="1899" y="1108.2" font-size="11" fill="#666" text-anchor="end">370</text>
<polyline points="620.0,1059.4 637.8,1064.5 655.0,1067.3 673.2,1066.3 689.4,1065.2 716.9,1064.2 737.5,1060.4 758.5,1055.9 782.2,1054.2 801.4,1054.9 844.4,1053.9 854.4,1048.4 864.7,1038.8 875.0,1026.7 881.9,1016.4 890.5,1006.1 899.1,1005.4 907.7,1011.3 916.3,1019.2 925.9,1033.6 935.2,1050.8 943.8,1062.1 953.4,1075.5 962.7,1093.8 971.3,1109.2 979.2,1117.1 988.4,1119.9 997.0,1117.8 1005.6,1115.1 1033.1,1111.0 1058.9,1102.7 1067.5,1095.8 1077.1,1081.7 1085.7,1079.0 1095.0,1089.3 1112.2,1099.6 1121.5,1101.7 1130.4,1108.2 1143.1,1124.7 1156.9,1142.6 1166.2,1151.2 1174.8,1151.5 1184.4,1146.3 1193.0,1143.9 1201.6,1147.4 1210.2,1147.0 1219.8,1140.2 1229.1,1130.5 1237.7,1119.5 1246.3,1109.9 1254.9,1104.8 1260.0,1104.1 1272.0,1101.3 1282.3,1095.5 1290.9,1090.3 1299.5,1081.7 1308.1,1074.8 1317.4,1094.4 1326.0,1102.3 1333.9,1102.3 1344.2,1103.7 1359.7,1107.8 1370.0,1112.7 1378.6,1116.1 1387.9,1117.8 1396.8,1113.7 1406.1,1102.3 1415.4,1086.9 1424.3,1068.0 1432.9,1050.8 1442.2,1038.8 1450.8,1027.4 1460.1,1014.7 1468.7,1008.5 1477.3,1011.9 1485.8,1018.8 1495.5,1027.4 1512.7,1033.6 1526.4,1042.2 1540.2,1049.1 1555.6,1052.5 1569.4,1055.3 1593.4,1055.9 1612.4,1054.9 1636.4,1057.7 1654.3,1060.4 1674.2,1062.8 1697.3,1062.8 1717.2,1061.4 1736.1,1062.1 1755.0,1060.4 1775.6,1057.3 1796.3,1055.9 1825.5,1057.3 1844.4,1054.9 1861.6,1051.5 1878.8,1045.6 1896.0,1036.7" fill="none" stroke="#007bff" stroke-width="2.900" stroke-linejoin="round" stroke-linecap="round"/>
<text x="620.500" y="1178" font-size="11" fill="#666">12:26</text>
<text x="674.0" y="1178" font-size="11" fill="#666" text-anchor="middle">12:28</text>
<text x="716.7" y="1178" font-size="11" fill="#666" text-anchor="middle">12:30</text>
<text x="759.4" y="1178" font-size="11" fill="#666" text-anchor="middle">12:32</text>
<text x="802.1" y="1178" font-size="11" fill="#666" text-anchor="middle">12:34</text>
<text x="844.8" y="1178" font-size="11" fill="#666" text-anchor="middle">12:36</text>
<text x="887.5" y="1178" font-size="11" fill="#666" text-anchor="middle">12:38</text>
<text x="930.2" y="1178" font-size="11" fill="#666" text-anchor="middle">12:40</text>
<text x="972.9" y="1178" font-size="11" fill="#666" text-anchor="middle">12:42</text>
<text x="1015.6" y="1178" font-size="11" fill="#666" text-anchor="middle">12:44</text>
<text x="1058.3" y="1178" font-size="11" fill="#666" text-anchor="middle">12:46</text>
<text x="1101.0" y="1178" font-size="11" fill="#666" text-anchor="middle">12:48</text>
<text x="1143.7" y="1178" font-size="11" fill="#666" text-anchor="middle">12:50</text>
<text x="1186.4" y="1178" font-size="11" fill="#666" text-anchor="middle">12:52</text>
<text x="1229.1" y="1178" font-size="11" fill="#666" text-anchor="middle">12:54</text>
<text x="1271.8" y="1178" font-size="11" fill="#666" text-anchor="middle">12:56</text>
<text x="1314.5" y="1178" font-size="11" fill="#666" text-anchor="middle">12:58</text>
<text x="1357.2" y="1178" font-size="11" fill="#666" text-anchor="middle">13:00</text>
<text x="1399.9" y="1178" font-size="11" fill="#666" text-anchor="middle">13:02</text>
<text x="1442.6" y="1178" font-size="11" fill="#666" text-anchor="middle">13:04</text>
<text x="1485.3" y="1178" font-size="11" fill="#666" text-anchor="middle">13:06</text>
<text x="1528.0" y="1178" font-size="11" fill="#666" text-anchor="middle">13:08</text>
<text x="1570.7" y="1178" font-size="11" fill="#666" text-anchor="middle">13:10</text>
<text x="1613.4" y="1178" font-size="11" fill="#666" text-anchor="middle">13:12</text>
<text x="1656.1" y="1178" font-size="11" fill="#666" text-anchor="middle">13:14</text>
<text x="1698.8" y="1178" font-size="11" fill="#666" text-anchor="middle">13:16</text>
<text x="1741.5" y="1178" font-size="11" fill="#666" text-anchor="middle">13:18</text>
<text x="1784.2" y="1178" font-size="11" fill="#666" text-anchor="middle">13:20</text>
<text x="1826.9" y="1178" font-size="11" fill="#666" text-anchor="middle">13:22</text>
<text x="1869.6" y="1178" font-size="11" fill="#666" text-anchor="middle">13:24</text>
<path d="M1347.500 961.500V1152" stroke="#b4b4b4" stroke-width="1"/>
<path d="M1276.500 1158.500H1341.500L1347.500 1152.500 1353.500 1158.500H1419.500V1185.500H1276.500Z" fill="#fff" stroke="#333" stroke-width="1" filter="drop-shadow(1px 1px 1.500px rgba(0,0,0,.35))"/>
<text x="1284" y="1177.300" font-size="10" fill="#333">Wednesday, Jun 7, 12:59:25</text>
</svg></div>
</body></html>
